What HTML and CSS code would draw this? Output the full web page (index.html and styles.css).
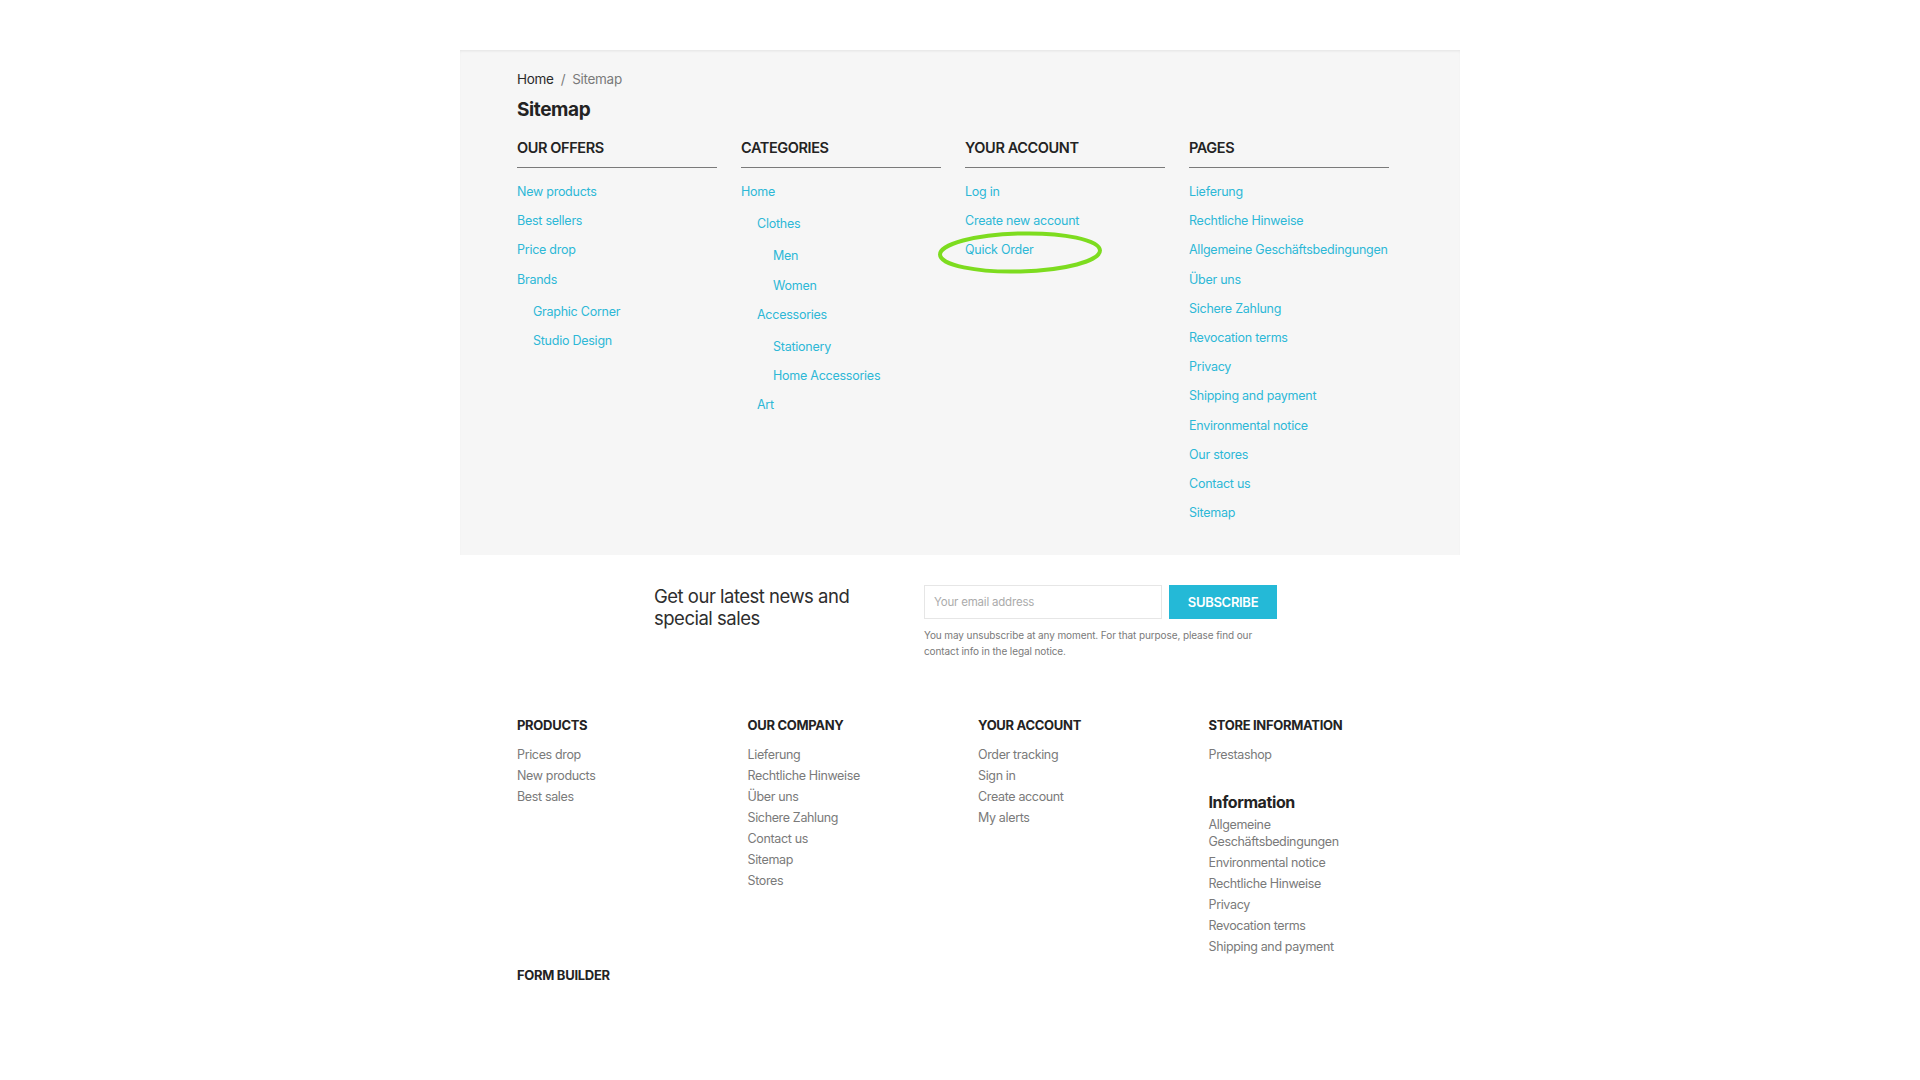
FILE: index.html
```html
<!DOCTYPE html>
<html lang="en">
<head>
<meta charset="utf-8">
<title>Sitemap</title>
<link rel="stylesheet" href="styles.css">
</head>
<body>
<main class="sitemap-panel">
  <nav class="breadcrumb"><a class="crumb-home" href="#">Home</a><span class="crumb-sep">/</span><span class="crumb-current">Sitemap</span></nav>
  <h1 class="page-title">Sitemap</h1>
  <div class="sitemap-cols">
    <section class="sitemap-col">
      <h2 class="col-title">OUR OFFERS</h2>
      <ul class="tree">
        <li><a href="#">New products</a></li>
        <li><a href="#">Best sellers</a></li>
        <li><a href="#">Price drop</a></li>
        <li><a href="#">Brands</a>
          <ul class="tree sub">
            <li><a href="#">Graphic Corner</a></li>
            <li><a href="#">Studio Design</a></li>
          </ul>
        </li>
      </ul>
    </section>
    <section class="sitemap-col">
      <h2 class="col-title">CATEGORIES</h2>
      <ul class="tree">
        <li><a href="#">Home</a>
          <ul class="tree sub">
            <li><a href="#">Clothes</a>
              <ul class="tree sub">
                <li><a href="#">Men</a></li>
                <li><a href="#">Women</a></li>
              </ul>
            </li>
            <li><a href="#">Accessories</a>
              <ul class="tree sub">
                <li><a href="#">Stationery</a></li>
                <li><a href="#">Home Accessories</a></li>
              </ul>
            </li>
            <li><a href="#">Art</a></li>
          </ul>
        </li>
      </ul>
    </section>
    <section class="sitemap-col">
      <h2 class="col-title">YOUR ACCOUNT</h2>
      <ul class="tree">
        <li><a href="#">Log in</a></li>
        <li><a href="#">Create new account</a></li>
        <li><a href="#">Quick Order</a></li>
      </ul>
    </section>
    <section class="sitemap-col">
      <h2 class="col-title">PAGES</h2>
      <ul class="tree">
        <li><a href="#">Lieferung</a></li>
        <li><a href="#">Rechtliche Hinweise</a></li>
        <li><a href="#">Allgemeine Geschäftsbedingungen</a></li>
        <li><a href="#">Über uns</a></li>
        <li><a href="#">Sichere Zahlung</a></li>
        <li><a href="#">Revocation terms</a></li>
        <li><a href="#">Privacy</a></li>
        <li><a href="#">Shipping and payment</a></li>
        <li><a href="#">Environmental notice</a></li>
        <li><a href="#">Our stores</a></li>
        <li><a href="#">Contact us</a></li>
        <li><a href="#">Sitemap</a></li>
      </ul>
    </section>
  </div>
  <svg class="annotation" width="172" height="49" viewBox="0 0 172 49" aria-hidden="true">
    <ellipse cx="86" cy="24.5" rx="80" ry="19" transform="rotate(-1.5 86 24.5)" fill="none" stroke="#7ddc1f" stroke-width="4"/>
  </svg>
</main>

<footer class="footer">
  <div class="newsletter">
    <p class="nl-title">Get our latest news and special sales</p>
    <form class="nl-form">
      <div class="nl-row">
        <input class="nl-input" type="email" placeholder="Your email address">
        <button class="nl-button" type="button">SUBSCRIBE</button>
      </div>
      <p class="nl-legal">You may unsubscribe at any moment. For that purpose, please find our contact info in the legal notice.</p>
    </form>
  </div>

  <div class="footer-cols">
    <section class="fcol">
      <h3 class="fcol-title">PRODUCTS</h3>
      <ul class="flinks">
        <li>Prices drop</li>
        <li>New products</li>
        <li>Best sales</li>
      </ul>
    </section>
    <section class="fcol">
      <h3 class="fcol-title">OUR COMPANY</h3>
      <ul class="flinks">
        <li>Lieferung</li>
        <li>Rechtliche Hinweise</li>
        <li>Über uns</li>
        <li>Sichere Zahlung</li>
        <li>Contact us</li>
        <li>Sitemap</li>
        <li>Stores</li>
      </ul>
    </section>
    <section class="fcol">
      <h3 class="fcol-title">YOUR ACCOUNT</h3>
      <ul class="flinks">
        <li>Order tracking</li>
        <li>Sign in</li>
        <li>Create account</li>
        <li>My alerts</li>
      </ul>
    </section>
    <section class="fcol fcol-store">
      <h3 class="fcol-title">STORE INFORMATION</h3>
      <ul class="flinks">
        <li>Prestashop</li>
      </ul>
      <h4 class="info-title">Information</h4>
      <ul class="flinks">
        <li>Allgemeine Geschäftsbedingungen</li>
        <li>Environmental notice</li>
        <li>Rechtliche Hinweise</li>
        <li>Privacy</li>
        <li>Revocation terms</li>
        <li>Shipping and payment</li>
      </ul>
    </section>
  </div>

  <h3 class="form-builder">FORM BUILDER</h3>
</footer>
</body>
</html>
```

FILE: styles.css
```css
* { box-sizing: border-box; }

html, body {
  margin: 0;
  padding: 0;
  background: #ffffff;
  font-family: Inter, "Noto Sans", "DejaVu Sans", sans-serif;
  color: #232323;
}

ul { list-style: none; margin: 0; padding: 0; }
h1, h2, h3, h4, p { margin: 0; }
a { text-decoration: none; }

/* ---------- Sitemap panel ---------- */
.sitemap-panel {
  position: relative;
  width: 1000px;
  margin: 50px auto 0;
  padding: 19px 57px 23px;
  background: #f6f6f6;
  box-shadow: inset 0 2px 3px -1px rgba(0, 0, 0, 0.08);
}

.breadcrumb {
  display: flex;
  align-items: center;
  height: 20px;
  font-size: 13.5px;
  line-height: 20px;
  letter-spacing: -0.3px;
}
.crumb-home { color: #2a2a2a; }
.crumb-sep { color: #7a7a7a; margin: 0 7px; }
.crumb-current { color: #7a7a7a; }

.page-title {
  margin-top: 9px;
  font-size: 19px;
  line-height: 24px;
  font-weight: 700;
  letter-spacing: -0.4px;
  color: #232323;
}

.sitemap-cols {
  display: grid;
  grid-template-columns: repeat(4, 200px);
  column-gap: 24px;
  margin-top: 16px;
}

.col-title {
  font-size: 14.5px;
  line-height: 20px;
  font-weight: 600;
  letter-spacing: -0.4px;
  color: #232323;
  padding-bottom: 9px;
  border-bottom: 1px solid #7a7a7a;
}

.sitemap-col > .tree { margin-top: 14px; }

.tree li {
  font-size: 12.5px;
  line-height: 19.2px;
  letter-spacing: -0.25px;
}
.tree li a { color: #2db8d6; display: inline-block; padding-bottom: 10px; }
.tree.sub { margin-top: 3px; padding-left: 16px; }

.annotation {
  position: absolute;
  left: 474px;
  top: 178px;
  pointer-events: none;
}

/* ---------- Footer ---------- */
.footer {
  width: 886px;
  margin: 0 auto;
  padding-bottom: 80px;
}

.newsletter {
  display: flex;
  align-items: flex-start;
  margin-top: 30px;
  padding-left: 137px;
}

.nl-title {
  flex: 0 0 270px;
  padding-right: 50px;
  font-size: 18.5px;
  line-height: 22px;
  font-weight: 400;
  letter-spacing: -0.5px;
  color: #2e2e2e;
}

.nl-form { width: 353px; }

.nl-row {
  display: flex;
  gap: 7px;
}

.nl-input {
  width: 238px;
  height: 34px;
  padding: 0 9px;
  border: 1px solid #e6e6e6;
  background: #ffffff;
  font-family: inherit;
  font-size: 11.5px;
  letter-spacing: -0.2px;
  color: #232323;
  outline: none;
}
.nl-input::placeholder { color: #ababab; }

.nl-button {
  width: 108px;
  height: 34px;
  border: 0;
  background: #24b9d7;
  color: #ffffff;
  font-family: inherit;
  font-size: 13px;
  font-weight: 600;
  letter-spacing: -0.3px;
  padding: 0;
}

.nl-legal {
  margin-top: 8px;
  width: 345px;
  font-size: 10px;
  line-height: 16px;
  letter-spacing: -0.1px;
  color: #7a7a7a;
}

.footer-cols {
  display: grid;
  grid-template-columns: repeat(4, 230.5px);
  margin-top: 56px;
}

.fcol { padding-right: 36px; }
.fcol-store { padding-right: 40px; }

.fcol-title {
  font-size: 13px;
  line-height: 20px;
  font-weight: 700;
  letter-spacing: -0.3px;
  color: #232323;
  margin-bottom: 9px;
}

.flinks li {
  font-size: 12.5px;
  line-height: 17px;
  padding: 2px 0;
  letter-spacing: -0.35px;
  color: #7a7a7a;
}

.info-title {
  margin-top: 26px;
  font-size: 16px;
  line-height: 22px;
  font-weight: 700;
  letter-spacing: -0.4px;
  color: #232323;
}

.info-title + .flinks { margin-top: 1px; }

.form-builder {
  margin-top: 8px;
  font-size: 13px;
  line-height: 20px;
  font-weight: 700;
  letter-spacing: -0.3px;
  color: #232323;
}
```
